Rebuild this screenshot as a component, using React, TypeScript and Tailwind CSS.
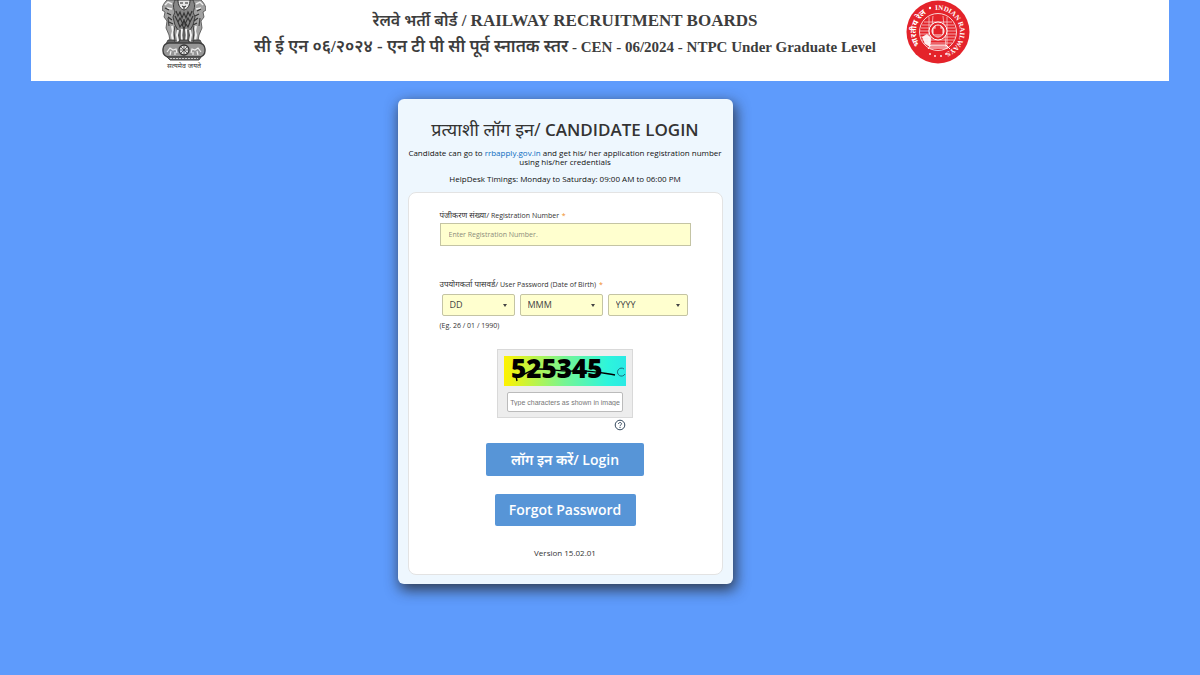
import React, { useState } from 'react';

interface DatePartProps {
  label: string;
  placeholder: string;
  options: string[];
  width: string;
}

const days = Array.from({ length: 31 }, (_, i) => String(i + 1).padStart(2, '0'));
const months = ['JAN', 'FEB', 'MAR', 'APR', 'MAY', 'JUN', 'JUL', 'AUG', 'SEP', 'OCT', 'NOV', 'DEC'];
const years = Array.from({ length: 40 }, (_, i) => String(2007 - i));

const Emblem = () => (
  <svg viewBox="0 0 44 70" className="w-11 h-[70px] shrink-0" role="img" aria-label="National emblem">
    {/* side lions */}
    <g fill="#a2a2a2" stroke="#4a4a4a" strokeWidth="0.8">
      <path d="M14 0H5C2 3 0 6 0 10l3 2-1 5 3 4-1 7 3 7 1 6h7V4z" />
      <path d="M30 0h9c3 3 5 6 5 10l-3 2 1 5-3 4 1 7-3 7-1 6h-7V4z" />
    </g>
    {/* front lion */}
    <path d="M13 0c-2 4-2 8 0 12l-2 5 2 8 3 5 1 12h10l1-12 3-5 2-8-2-5c2-4 2-8 0-12z" fill="#868686" stroke="#3f3f3f" />
    <path d="M16 0c0 5 2 9 6 10 4-1 6-5 6-10z" fill="#e4e4e4" stroke="#333" />
    <path d="M18 3h3m2 0h3M20 6l2 1 2-1m-2 1v2" stroke="#222" fill="none" />
    <path d="M3 5l3-3 4 2M41 5l-3-3-4 2M5 8l5 1M39 8l-5 1" stroke="#eee" strokeWidth="1.4" fill="none" />
    <path d="M14 11l2 5 2-4 2 6 2-5 2 5 2-6 2 4 2-5M13 16l3 6 2-4 3 6 1-5 1 5 3-6 2 4 3-6M16 22l2 5 2-3 2 5 2-5 2 3 2-5M3 8l4 2m-2 3l4 2m-3 2l4 3m-3 2l4 2m28-15l-4 2m2 3l-4 2m3 2l-4 3m3 2l-4 2" stroke="#333" strokeWidth="1.1" fill="none" />
    {/* legs */}
    <path d="M10 26l1 5-1 4 1 6M34 26l-1 5 1 4-1 6M16 30l-1 5 1 6M28 30l1 5-1 6M20 29l-1 6 1 7M24 29l1 6-1 7" stroke="#f2f2f2" strokeWidth="2" fill="none" />
    <path d="M13 26l-1 6 1 9M31 26l1 6-1 9M18 30v11M26 30v11M22 29v13M6 18l1 8M38 18l-1 8" stroke="#444" strokeWidth="1.2" fill="none" />
    <path d="M6 40h6l1 2h4l1-2h8l1 2h4l1-2h6l2 4H4z" fill="#666" stroke="#333" strokeWidth="0.8" />
    {/* abacus */}
    <rect x="1" y="43" width="42" height="14" rx="6" fill="#969696" stroke="#3f3f3f" strokeWidth="1.4" />
    <path d="M5 52l3-4 3 2 3-1 1 4M9 51l-1 4m5-3v3M39 52l-3-4-3 2-3-1-1 4m6-2l1 4m-5-3v3" stroke="#eee" strokeWidth="1.2" fill="none" />
    <circle cx="22" cy="50" r="5" fill="#e4e4e4" stroke="#333" strokeWidth="1.3" />
    <path d="M22 45v10M17 50h10M18.500 46.500l7 7M25.500 46.500l-7 7" stroke="#444" strokeWidth="0.8" />
    <path d="M5 57h34l-2 3H8z" fill="#666" stroke="#444" />
    <path d="M8 58.500h28" stroke="#ccc" strokeDasharray="2 1" />
    <text x="22" y="68" textAnchor="middle" fontSize="7" fill="#333" fontFamily="'Noto Sans', sans-serif">सत्यमेव जयते</text>
  </svg>
);

const RailwayLogo = () => (
  <svg viewBox="0 0 64 64" className="w-16 h-16 shrink-0" role="img" aria-label="Indian Railways">
    <defs>
      <path id="ring" d="M32 54a22 22 0 1 1 .1 0" />
    </defs>
    <circle cx="32" cy="32" r="31.500" fill="#e4232a" />
    <circle cx="32" cy="32" r="18.500" fill="#e4232a" stroke="#fff" strokeWidth="0.8" />
    <g stroke="#fff" strokeWidth="0.7" fill="none" opacity="0.85">
      <path d="M18 22h28M16 25h32M15 28h34M14 31h36M14 34h36M15 37h34M16 40h32M18 43h28" />
      <path d="M23 17v29M41 17v29M27 16l-3 31M37 16l3 31" />
    </g>
    <circle cx="32" cy="31" r="9" fill="#e4232a" stroke="#fff" />
    <circle cx="32" cy="31" r="6" fill="#f6b4b4" stroke="#fff" />
    <path d="M28 29h8v5h-8zM30 26h4v3h-4zM28 36h8" fill="#e4232a" stroke="#e4232a" strokeWidth="0.7" />
    <path d="M16 37l5-3 4 4-1 9-5-3z" fill="#fff" opacity="0.9" />
    <path d="M22 49l3-4h15l4 4M25 46h16M24 48h18" stroke="#fff" fill="none" />
    <g fill="#fff">
      <circle cx="24" cy="54" r="0.900" />
      <circle cx="29" cy="56" r="0.900" />
      <circle cx="35" cy="56" r="0.900" />
      <circle cx="40" cy="54" r="0.900" />
      <circle cx="24" cy="8" r="1.200" />
    </g>
    <text fill="#fff" fontSize="8" fontWeight="700" fontFamily="'Noto Sans', sans-serif">
      <textPath href="#ring" startOffset="15%">भारतीय रेल</textPath>
    </text>
    <text fill="#fff" fontSize="7" fontWeight="700" fontFamily="'Liberation Serif', serif">
      <textPath href="#ring" startOffset="48%">INDIAN RAILWAYS</textPath>
    </text>
  </svg>
);

const DatePart: React.FC<DatePartProps> = ({ label, placeholder, options, width }) => (
  <div className={`relative ${width}`}>
    <select
      aria-label={label}
      defaultValue=""
      className="block appearance-none w-full h-[22px] rounded-xs border border-[#c4c4a4] bg-[#ffffcf] pl-[7px] text-[9px] leading-4 text-[#444]"
    >
      <option value="">{placeholder}</option>
      {options.map(o => (
        <option key={o} value={o}>{o}</option>
      ))}
    </select>
    <svg viewBox="0 0 4 3" className="absolute right-2 top-[10px] w-1 h-[3px] pointer-events-none" aria-hidden="true">
      <path d="M0 0h4L2 3z" fill="#444" />
    </svg>
  </div>
);

const Captcha = () => {
  const [code, setCode] = useState('');

  return (
    <div className="w-[136px] border border-[#d9d9d9] bg-[#ededed] p-1.5 pb-[5px]">
      <svg viewBox="0 0 122 30" className="block w-full overflow-visible" role="img" aria-label="Captcha">
        <defs>
          <linearGradient id="captcha-fill">
            <stop offset="0" stopColor="#fff200" />
            <stop offset="0.5" stopColor="#75f594" />
            <stop offset="0.85" stopColor="#2df5dc" />
            <stop offset="1" stopColor="#2be9e5" />
          </linearGradient>
        </defs>
        <rect width="122" height="30" fill="url(#captcha-fill)" />
        <text x="7" y="22" fontSize="26" fontWeight="800" fontFamily="'Open Sans', sans-serif">525345</text>
        <path d="M13 25l-1-5c8 1 13-7 23-7 14 0 21 3 37 2 14-1 21 1 39 4" stroke="#000" strokeWidth="1.4" fill="none" />
        <path d="M120 13a4 4 0 1 0 1 5" stroke="#176f7c" fill="none" />
      </svg>
      <input
        type="text"
        aria-label="Captcha text"
        value={code}
        onChange={(e) => setCode(e.target.value)}
        placeholder="Type characters as shown in image"
        className="block w-[116px] h-5 mx-auto mt-1.5 rounded-xs border border-[#bbb] bg-white px-px text-center font-['Liberation_Sans',sans-serif] text-[7px] placeholder:text-[#777]"
      />
    </div>
  );
};

const App = () => {
  const [regNumber, setRegNumber] = useState('');

  return (
    <div className="min-h-screen bg-[#5e9bfc] px-[31px] font-['Open_Sans','Noto_Sans',sans-serif] text-[#333]">
      <header className="h-[81px] bg-white flex justify-center pr-[68px] overflow-hidden">
        <Emblem />
        <div className="ml-12 mr-[30px] pt-2 text-center whitespace-nowrap font-bold font-['Liberation_Serif','Noto_Sans',serif] text-[#3d3d3d]">
          <p className="text-[17px] leading-[26px]"><span className="text-base leading-[26px] font-semibold">रेलवे भर्ती बोर्ड</span> / RAILWAY RECRUITMENT BOARDS</p>
          <p className="text-[15px] leading-[26px]"><span className="text-[17px] leading-[26px] font-semibold">सी ई एन ०६/२०२४ - एन टी पी सी पूर्व स्नातक स्तर</span> - CEN - 06/2024 - NTPC Under Graduate Level</p>
        </div>
        <RailwayLogo />
      </header>

      <main className="flex justify-center pt-[18px] pr-[70px]">
        <div className="w-[335px] rounded-md bg-[#eef7fe] px-2.5 pt-[18px] pb-[9px] shadow-[2px_5px_14px_1px_rgba(40,45,55,0.85)]">
          <h1 className="text-center text-[17px] leading-6 font-semibold whitespace-nowrap">
            <span className="text-lg leading-6 font-normal">प्रत्याशी लॉग इन/</span> CANDIDATE LOGIN
          </h1>
          <p className="mt-1.5 -mx-1 text-center text-[8px] leading-[9px] text-[#111]">
            Candidate can go to <a href="#apply" className="text-[#0a6cc0]">rrbapply.gov.in</a> and get his/ her application registration number
            <br />
            using his/her credentials
          </p>
          <p className="mt-2 text-center text-[8px] leading-[10px] text-[#111]">HelpDesk Timings: Monday to Saturday: 09:00 AM to 06:00 PM</p>

          <form
            onSubmit={(e) => e.preventDefault()}
            className="mt-2 rounded-lg border border-[#e3e3e3] bg-white px-[31px] pt-4 pb-[15px] flex flex-col"
          >
            <label htmlFor="reg-number" className="text-[7px] leading-3">
              <span className="text-[8px] leading-3">पंजीकरण संख्या/</span> Registration Number <span className="ml-px text-[#f08c1e]">*</span>
            </label>
            <input
              id="reg-number"
              type="text"
              value={regNumber}
              onChange={(e) => setRegNumber(e.target.value)}
              placeholder="Enter Registration Number."
              className="mt-px h-[23px] w-full border border-[#c4c4a4] bg-[#ffffcf] px-2 text-[7px] placeholder:text-[#8c8c7c]"
            />

            <fieldset className="mt-8">
              <legend className="text-[7px] leading-3">
                <span className="text-[8px] leading-3">उपयोगकर्ता पासवर्ड/</span> User Password (Date of Birth) <span className="ml-px text-[#f08c1e]">*</span>
              </legend>
              <div className="mt-[3px] flex gap-[5px] px-0.5">
                <DatePart label="Day" placeholder="DD" options={days} width="w-[73px]" />
                <DatePart label="Month" placeholder="MMM" options={months} width="w-[83px]" />
                <DatePart label="Year" placeholder="YYYY" options={years} width="w-20" />
              </div>
              <p className="mt-1 text-[7px] leading-3">(Eg. 26 / 01 / 1990)</p>
            </fieldset>

            <div className="mt-[17px] flex flex-col items-center">
              <Captcha />
              <button type="button" aria-label="Captcha help" className="ml-[110px] mt-px">
                <svg viewBox="0 0 12 12" className="block w-3 h-3" fill="none" stroke="#34495e">
                  <circle cx="6" cy="6" r="4.800" />
                  <path d="M4.500 5c0-2 3-2 3-.2C7.500 6 6 5.900 6 7.200M6 8v1" />
                </svg>
              </button>
              <button type="submit" className="mt-3 h-[33px] w-[158px] rounded-xs bg-[#5795d7] text-sm font-semibold text-white whitespace-nowrap">
                लॉग इन करें/ Login
              </button>
              <button type="button" className="mt-[18px] h-8 w-[141px] rounded-xs bg-[#5795d7] text-sm font-semibold text-white">
                Forgot Password
              </button>
              <p className="mt-[21px] text-[8px] leading-3">Version 15.02.01</p>
            </div>
          </form>
        </div>
      </main>
    </div>
  );
};

export default App;
